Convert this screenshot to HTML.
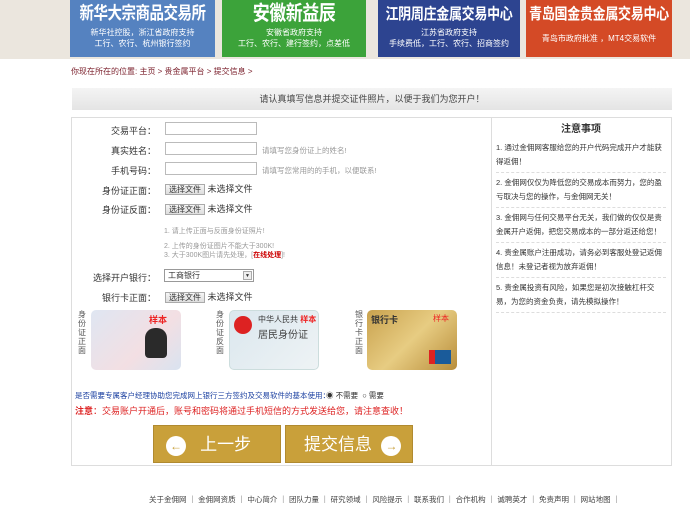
<!DOCTYPE html>
<html><head><meta charset="utf-8"><style>
*{margin:0;padding:0;box-sizing:border-box}
body{width:690px;height:510px;overflow:hidden;background:#fff;font-family:"Liberation Sans","Noto Sans CJK SC",sans-serif;font-size:9px;color:#333;position:relative}
.a{position:absolute}
.top{left:0;top:0;width:690px;height:59px;background:#ebe6de}
.bn{top:0;height:57px;color:#fff;text-align:center;overflow:hidden}
.bn b{display:block;font-size:14.5px;font-weight:bold;line-height:20px;margin-top:4px;white-space:nowrap;transform:scaleY(1.2);letter-spacing:-0.5px}
.bn b.s{font-size:13px;letter-spacing:-0.3px}
.bn i{display:block;font-style:normal;font-size:8px;line-height:11px;white-space:nowrap}
.bn .t1{margin-top:3px}
.lab{width:88px;text-align:right;font-size:9px;color:#333}
.inp{width:92px;height:13px;border:1px solid #bbb;background:#fff}
.hint{color:#999;font-size:7.5px}
.fbtn{border:1px solid #aaa;background:linear-gradient(#f6f6f6,#ddd);font-size:8px;padding:0 3px;height:12px;line-height:10px}
.note p{font-size:7.5px;line-height:14px;border-bottom:1px dashed #ddd;padding:3px 0 3px;color:#333}
.card{width:90px;height:60px;border-radius:5px}
.vt{width:8px;font-size:8px;line-height:9px;color:#555}
.btn{top:425px;height:38px;width:128px;background:#c9a03a;color:#fff;font-size:17px;line-height:38px;border:1px solid #b08a30}
.circ{display:inline-block;width:20px;height:20px;border-radius:50%;background:#fff;color:#c9a03a;font-size:12px;line-height:20px;text-align:center;vertical-align:middle;font-weight:bold}
</style></head><body>
<div class="a top"></div>
<div class="a bn" style="left:70px;width:145px;background:#5582c0"><b>新华大宗商品交易所</b><i class="t1">新华社控股，浙江省政府支持</i><i>工行、农行、杭州银行签约</i></div>
<div class="a bn" style="left:222px;width:144px;background:#3ca33a"><b style="font-size:17px">安徽新益辰</b><i class="t1">安徽省政府支持</i><i>工行、农行、建行签约，点差低</i></div>
<div class="a bn" style="left:378px;width:142px;background:#2d4490"><b class="s">江阴周庄金属交易中心</b><i class="t1">江苏省政府支持</i><i>手续费低，工行、农行、招商签约</i></div>
<div class="a bn" style="left:526px;width:146px;background:#d44a26"><b class="s">青岛国金贵金属交易中心</b><i style="margin-top:9px">青岛市政府批准 ，MT4交易软件</i></div>

<div class="a" style="left:71px;top:66px;font-size:8px;color:#7a1f2b">你现在所在的位置: 主页 &gt; 贵金属平台 &gt; 提交信息 &gt;</div>
<div class="a" style="left:72px;top:88px;width:600px;height:22px;background:linear-gradient(#f4f4f4,#e4e4e4);text-align:center;line-height:22px;font-size:9px;color:#444">请认真填写信息并提交证件照片，以便于我们为您开户！</div>

<div class="a" style="left:71px;top:117px;width:601px;height:349px;border:1px solid #ddd"></div>
<div class="a" style="left:491px;top:117px;width:1px;height:349px;background:#ddd"></div>

<div class="a lab" style="left:68px;top:124px">交易平台：</div><div class="a inp" style="left:165px;top:122px"></div>
<div class="a lab" style="left:68px;top:144px">真实姓名：</div><div class="a inp" style="left:165px;top:142px"></div><div class="a hint" style="left:262px;top:145px">请填写您身份证上的姓名!</div>
<div class="a lab" style="left:68px;top:164px">手机号码：</div><div class="a inp" style="left:165px;top:162px"></div><div class="a hint" style="left:262px;top:165px">请填写您常用的的手机，以便联系!</div>
<div class="a lab" style="left:68px;top:184px">身份证正面：</div><div class="a" style="left:165px;top:182px"><span class="fbtn">选择文件</span> 未选择文件</div>
<div class="a lab" style="left:68px;top:203px">身份证反面：</div><div class="a" style="left:165px;top:202px"><span class="fbtn">选择文件</span> 未选择文件</div>
<div class="a hint" style="left:164px;top:226px;font-size:7px">1. 请上传正面与反面身份证照片!</div>
<div class="a hint" style="left:164px;top:242px;font-size:7px;line-height:9px">2. 上传的身份证图片不能大于300K!<br>3. 大于300K图片请先处理，[<b style="color:#c00">在线处理</b>]!</div>
<div class="a lab" style="left:68px;top:271px">选择开户银行：</div>
<div class="a" style="left:164px;top:269px;width:90px;height:13px;border:1px solid #999;font-size:8px;line-height:11px;padding-left:3px">工商银行<span style="position:absolute;right:1px;top:1px;width:9px;height:9px;border:1px solid #aaa;background:#eee;font-size:5px;line-height:8px;text-align:center">▼</span></div>
<div class="a lab" style="left:68px;top:291px">银行卡正面：</div><div class="a" style="left:165px;top:290px"><span class="fbtn">选择文件</span> 未选择文件</div>

<div class="a vt" style="left:78px;top:310px">身份证正面</div>
<div class="a card" style="left:91px;top:310px;background:linear-gradient(135deg,#dfe6f2,#f3dfe3 60%,#d9e3f0)"><span class="a" style="right:14px;top:3px;color:#e22;font-weight:bold;font-size:9px">样本</span><span class="a" style="right:14px;top:18px;width:22px;height:30px;background:#2a2a2a;border-radius:10px 10px 4px 4px"></span></div>
<div class="a vt" style="left:216px;top:310px">身份证反面</div>
<div class="a card" style="left:229px;top:310px;background:linear-gradient(135deg,#dbe7ee,#eef3f5);border:1px solid #cdd"><span class="a" style="left:4px;top:5px;width:18px;height:18px;border-radius:50%;background:#d22"></span><span class="a" style="left:28px;top:3px;font-size:8px;color:#333">中华人民共 <b style="color:#e22">样本</b></span><span class="a" style="left:28px;top:15px;font-size:10px;color:#444">居民身份证</span></div>
<div class="a vt" style="left:355px;top:310px">银行卡正面</div>
<div class="a card" style="left:367px;top:310px;background:linear-gradient(135deg,#c9a24e,#e7cc82 50%,#b88d3a)"><span class="a" style="left:4px;top:3px;font-size:9px;font-weight:bold;color:#333">银行卡</span><span class="a" style="right:8px;top:3px;font-size:8px;color:#e22">样本</span><span class="a" style="right:6px;bottom:6px;width:22px;height:14px;background:#1a5b9a;border-left:6px solid #d22"></span></div>

<div class="a" style="left:75px;top:390px;font-size:7.5px;color:#1a3fa0">是否需要专属客户经理协助您完成网上银行三方签约及交易软件的基本使用：</div>
<div class="a" style="left:326px;top:390px;font-size:7.5px;color:#333">◉ 不需要 &nbsp;○ 需要</div>
<div class="a" style="left:75px;top:404px;font-size:9px;color:#d22"><b>注意</b>：交易账户开通后，账号和密码将通过手机短信的方式发送给您，请注意查收！</div>

<div class="a btn" style="left:153px;padding-left:12px"><span class="circ">←</span>&nbsp;&nbsp; 上一步</div>
<div class="a btn" style="left:285px;padding-left:18px">提交信息 &nbsp;<span class="circ">→</span></div>

<div class="a" style="left:496px;top:122px;width:170px">
<div style="text-align:center;font-weight:bold;font-size:10px;line-height:16px">注意事项</div>
<div class="note">
<p>1. 通过金佣网客服给您的开户代码完成开户才能获得返佣！</p>
<p>2. 金佣网仅仅为降低您的交易成本而努力，您的盈亏取决与您的操作，与金佣网无关！</p>
<p>3. 金佣网与任何交易平台无关，我们做的仅仅是贵金属开户返佣，把您交易成本的一部分返还给您！</p>
<p>4. 贵金属账户注册成功，请务必到客服处登记返佣信息！未登记者视为放弃返佣！</p>
<p>5. 贵金属投资有风险，如果您是初次接触杠杆交易，为您的资金负责，请先模拟操作！</p>
</div></div>

<div class="a" style="left:149px;top:494px;font-size:7.5px;color:#444;white-space:nowrap">关于金佣网 ｜ 金佣网资质 ｜ 中心简介 ｜ 团队力量 ｜ 研究领域 ｜ 风险提示 ｜ 联系我们 ｜ 合作机构 ｜ 诚聘英才 ｜ 免责声明 ｜ 网站地图 ｜</div>
</body></html>
